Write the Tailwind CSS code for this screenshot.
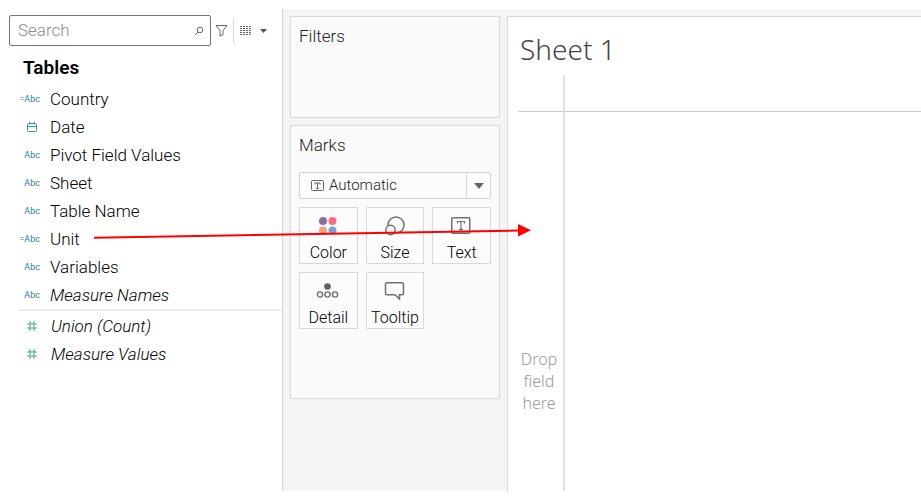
<!DOCTYPE html>
<html lang="en">
<head>
<meta charset="utf-8">
<meta name="viewport" content="width=device-width, initial-scale=1">
<title>Sheet 1</title>
<script src="https://cdn.jsdelivr.net/npm/@tailwindcss/browser@4"></script>
</head>
<body class="relative flex min-h-screen overflow-x-hidden bg-white pt-[9px] pb-[11px] font-['Roboto','Liberation_Sans',sans-serif] font-light text-black">

<!-- Data pane -->
<aside class="w-[282px] shrink-0 pt-[6px]">
  <div class="flex items-center pl-[9px]">
    <form class="flex h-[31px] w-[202px] items-center rounded-xs border border-[#757575] pr-[6px]">
      <input type="search" aria-label="Search" placeholder="Search" class="h-full min-w-0 flex-1 bg-transparent pb-px pl-2 text-[17px] outline-none placeholder:text-[#8c8c8c]">
      <button type="submit" aria-label="Run search">
        <svg class="size-[10px]" viewBox="0 0 10 10" fill="none" stroke="#666"><circle cx="6" cy="4" r="2.8"/><path d="M4 6 1 9.2"/></svg>
      </button>
    </form>
    <button type="button" aria-label="Filter fields" class="ml-1">
      <svg class="h-[13px] w-[13px]" viewBox="0 0 13 13" fill="none" stroke="#666"><path d="M1 1.500h11L8 6.500v4.200l-3 1.300V6.500z"/></svg>
    </button>
    <span class="ml-[5px] h-6 w-px bg-[#d4d4d4]"></span>
    <button type="button" aria-label="View options" class="ml-[6px] flex items-center gap-2">
      <svg class="h-[9px] w-3" viewBox="0 0 12 9" stroke="#666" stroke-dasharray="2 1"><path d="M0 .5H12M0 2.500H12M0 4.500H12M0 6.500H12M0 8.500H12"/></svg>
      <svg class="h-1 w-[7px]" viewBox="0 0 7 4" fill="#555"><path d="M0 0h7L3.500 4z"/></svg>
    </button>
  </div>

  <h2 class="mt-2 pl-[23px] text-[19px] font-semibold leading-7 text-black">Tables</h2>

  <ul class="mt-[3px] text-[17px] leading-7">
    <li class="flex h-7 items-center"><span class="w-10 shrink-0 text-right text-[9px] font-normal text-[#2f7d9d]">=Abc</span><span class="ml-[10px]">Country</span></li>
    <li class="flex h-7 items-center"><span class="flex w-10 shrink-0 justify-end pr-[3px]"><svg class="size-[10px]" viewBox="0 0 10 10" fill="none" stroke="#4a8ca8"><rect x=".5" y="1.500" width="9" height="8" rx="1"/><path d="M.5 4.500h9M2.500 0v2.500M7.500 0v2.500"/></svg></span><span class="ml-[10px]">Date</span></li>
    <li class="flex h-7 items-center"><span class="w-10 shrink-0 text-right text-[9px] font-normal text-[#2f7d9d]">Abc</span><span class="ml-[10px]">Pivot Field Values</span></li>
    <li class="flex h-7 items-center"><span class="w-10 shrink-0 text-right text-[9px] font-normal text-[#2f7d9d]">Abc</span><span class="ml-[10px]">Sheet</span></li>
    <li class="flex h-7 items-center"><span class="w-10 shrink-0 text-right text-[9px] font-normal text-[#2f7d9d]">Abc</span><span class="ml-[10px]">Table Name</span></li>
    <li class="flex h-7 items-center"><span class="w-10 shrink-0 text-right text-[9px] font-normal text-[#2f7d9d]">=Abc</span><span class="ml-[10px]">Unit</span></li>
    <li class="flex h-7 items-center"><span class="w-10 shrink-0 text-right text-[9px] font-normal text-[#2f7d9d]">Abc</span><span class="ml-[10px]">Variables</span></li>
    <li class="flex h-7 items-center"><span class="w-10 shrink-0 text-right text-[9px] font-normal text-[#2f7d9d]">Abc</span><span class="ml-[10px] italic">Measure Names</span></li>
  </ul>
  <ul class="ml-[18px] border-t-2 border-[#ececec] pt-px text-[17px] leading-7">
    <li class="flex h-7 items-center"><svg class="ml-[9px] size-[10px]" viewBox="0 0 10 10" fill="none" stroke="#46a483"><path d="M3 0v10M7 0v10M0 3h10M0 7h10"/></svg><span class="ml-[14px] italic">Union (Count)</span></li>
    <li class="flex h-7 items-center"><svg class="ml-[9px] size-[10px]" viewBox="0 0 10 10" fill="none" stroke="#46a483"><path d="M3 0v10M7 0v10M0 3h10M0 7h10"/></svg><span class="ml-[14px] italic">Measure Values</span></li>
  </ul>
</aside>

<!-- Filters and marks shelves -->
<section class="flex w-[225px] shrink-0 flex-col gap-[7px] border-l border-[#d4d4d4] bg-[#f4f4f4] px-[7px] pt-[7px] text-[#222]">
  <div class="h-[102px] w-[210px] border border-[#d8d8d8] bg-[#fafafa] px-2 pt-[7px]">
    <h2 class="text-[17px] leading-6">Filters</h2>
  </div>
  <div class="h-[274px] w-[210px] border border-[#d8d8d8] bg-[#fafafa] px-2 pt-[7px]">
    <h2 class="text-[17px] leading-6">Marks</h2>
    <div class="relative mt-[15px]">
      <select aria-label="Mark type" class="block h-[27px] w-full appearance-none rounded-xs border border-[#d0d0d0] bg-[#fcfcfc] pl-[29px] text-[15px] text-[#222]"><option>Automatic</option></select>
      <svg class="pointer-events-none absolute top-2 left-3 h-[11px] w-[13px]" viewBox="0 0 13 11" fill="none" stroke="#666"><rect x=".5" y=".5" width="12" height="10" rx="1"/><path d="M4 4.500V3h5v1.500M6.500 3v5M5 8.500h3"/></svg>
      <span class="pointer-events-none absolute inset-y-px right-px flex w-6 items-center justify-center border-l border-[#d8d8d8]"><svg class="h-[6px] w-[10px]" viewBox="0 0 10 6" fill="#666"><path d="M0 0h10L5 6z"/></svg></span>
    </div>
    <div class="mt-2 grid grid-cols-3 gap-2 text-base leading-5 text-black">
      <button type="button" class="flex h-[57px] flex-col items-center border border-[#d8d8d8] bg-[#fcfcfc] pt-2">
        <svg class="h-5 w-6" viewBox="0 0 24 20"><circle cx="7" cy="5" r="4" fill="#86709a"/><circle cx="16.500" cy="5" r="4" fill="#fb6a80"/><circle cx="7" cy="14.500" r="4" fill="#f2a57c"/><circle cx="16.500" cy="14.500" r="4" fill="#7c9fce"/></svg>
        <span class="mt-[7px]">Color</span>
      </button>
      <button type="button" class="flex h-[57px] flex-col items-center border border-[#d8d8d8] bg-[#fcfcfc] pt-2">
        <svg class="h-5 w-6" viewBox="0 0 24 20" fill="none" stroke="#707070" stroke-width="1.500"><circle cx="13" cy="9" r="8"/><circle cx="7.500" cy="14" r="4.700" fill="#fcfcfc"/></svg>
        <span class="mt-[7px]">Size</span>
      </button>
      <button type="button" class="flex h-[57px] flex-col items-center border border-[#d8d8d8] bg-[#fcfcfc] pt-2">
        <svg class="h-5 w-6" viewBox="0 0 24 20" fill="none" stroke="#707070" stroke-width="1.500"><rect x="1.750" y="1.750" width="18" height="15.500" rx="1"/><path stroke-width="1.200" d="M7.500 7.500V5.500h7v2M11 5.500v8M9 13.700h4"/></svg>
        <span class="mt-[7px]">Text</span>
      </button>
      <button type="button" class="flex h-[57px] flex-col items-center border border-[#d8d8d8] bg-[#fcfcfc] pt-2">
        <svg class="h-5 w-6" viewBox="0 0 24 20" fill="none" stroke="#707070" stroke-width="1.400"><circle cx="11.500" cy="5.500" r="3.300" fill="#606060" stroke="none"/><circle cx="4" cy="13.500" r="2.600"/><circle cx="11.500" cy="13.500" r="2.600"/><circle cx="19" cy="13.500" r="2.600"/></svg>
        <span class="mt-[7px]">Detail</span>
      </button>
      <button type="button" class="flex h-[57px] flex-col items-center border border-[#d8d8d8] bg-[#fcfcfc] pt-2">
        <svg class="h-5 w-6" viewBox="0 0 24 20" fill="none" stroke="#707070" stroke-width="1.500"><path d="M4 1.750h15q1.500 0 1.500 1.500v9q0 1.500-1.500 1.500h-2.500V18L12 13.750H4q-1.500 0-1.500-1.500v-9q0-1.500 1.500-1.500z"/></svg>
        <span class="mt-[7px]">Tooltip</span>
      </button>
    </div>
  </div>
</section>

<!-- Sheet -->
<div class="flex min-w-0 flex-1 flex-col bg-[#f4f4f4] pt-[7px]">
  <main class="flex flex-1 flex-col border-t border-l border-[#d8d8d8] bg-white pl-[10px] font-['Noto_Sans','Open_Sans',sans-serif] font-light">
    <h1 class="mt-3 pl-[2px] text-[28px] leading-10 text-[#444]">Sheet 1</h1>
    <div class="mt-[6px] grid flex-1 grid-cols-[47px_1fr] grid-rows-[37px_1fr]">
      <div class="border-r-2 border-b border-r-[#e2e2e2] border-b-[#ccc]"></div>
      <div class="border-b border-[#ccc]"></div>
      <div class="border-r-2 border-[#e2e2e2] pt-[236px] pr-[3px] text-center text-base leading-[22px] text-[#999]">Drop field here</div>
      <div></div>
    </div>
  </main>
</div>

<!-- Drag arrow from the Unit field to the sheet -->
<svg class="pointer-events-none absolute top-[220px] left-[90px] h-5 w-[450px]" viewBox="0 0 450 20" aria-hidden="true"><path d="M4 17.800 429 10.500" stroke="#f00" stroke-width="2"/><path d="M428 4v12.500l13-6.300z" fill="#f00"/></svg>
</body>
</html>
